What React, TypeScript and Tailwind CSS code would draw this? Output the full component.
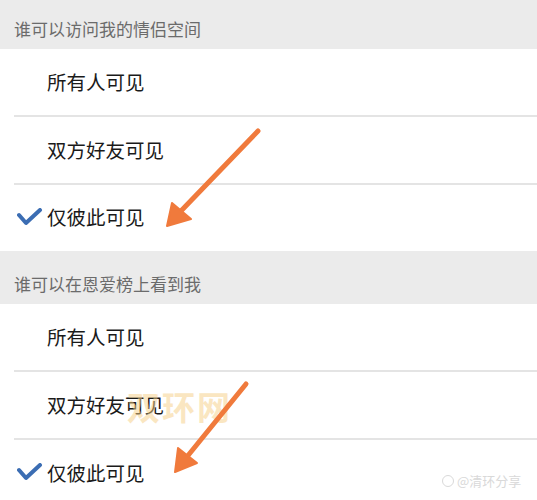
import React from "react";

const font = { fontFamily: '"Noto Sans CJK SC", "Noto Sans", sans-serif' };

const Check = () => (
  <svg width="26" height="20" viewBox="0 0 26 20" className="absolute left-[17px] top-[23px]">
    <polyline points="2,7 9,15 23,2" fill="none" stroke="#3b6db3" strokeWidth="4" strokeLinecap="round" strokeLinejoin="round" />
  </svg>
);

const Row = ({ label, checked, last }: { label: string; checked?: boolean; last?: boolean }) => (
  <div className={`relative flex items-center pb-[3px] ${last ? "h-[66px]" : "h-[68px]"}`}>
    {checked && <Check />}
    <span className="pl-[47px] text-[19.5px] text-[#1a1a1a] leading-none">{label}</span>
    {!last && <div className="absolute bottom-0 left-[14px] right-0 h-[2px] bg-[#e4e4e4]" />}
  </div>
);

const Header = ({ title, h }: { title: string; h: string }) => (
  <div className={`flex items-end pl-[14px] pb-[9px] bg-[#ebebeb] ${h}`}>
    <span className="text-[17px] text-[#6b6b6b] leading-[22px]">{title}</span>
  </div>
);

export default function App() {
  return (
    <div className="relative w-[537px] h-[500px] overflow-hidden bg-white" style={font}>
      <Header title="谁可以访问我的情侣空间" h="h-[49px]" />
      <Row label="所有人可见" />
      <Row label="双方好友可见" />
      <Row label="仅彼此可见" checked last />
      <Header title="谁可以在恩爱榜上看到我" h="h-[53px]" />
      <Row label="所有人可见" />
      <Row label="双方好友可见" />
      <Row label="仅彼此可见" checked />

      <div className="absolute left-[127px] top-[390px] text-[33px] font-bold tracking-[2px] text-[#f6cf85] opacity-50 leading-none">
        双环网
      </div>
      <div className="absolute left-[442px] top-[474px] flex items-center gap-[3px] text-[13px] text-[#d9d9d9] leading-none">
        <span className="w-[12px] h-[12px] rounded-full border border-[#d9d9d9]" />
        <span>@清环分享</span>
      </div>

      <svg className="absolute left-0 top-0" width="537" height="500" viewBox="0 0 537 500">
        <g fill="#f07a3c" stroke="#f07a3c">
          <line x1="258" y1="131" x2="180" y2="212" strokeWidth="5" strokeLinecap="round" />
          <polygon points="167,226 172,203 191,219" strokeWidth="2" strokeLinejoin="round" />
          <line x1="246" y1="384" x2="186" y2="458" strokeWidth="5" strokeLinecap="round" />
          <polygon points="175,472 178,448 197,463" strokeWidth="2" strokeLinejoin="round" />
        </g>
      </svg>
    </div>
  );
}
